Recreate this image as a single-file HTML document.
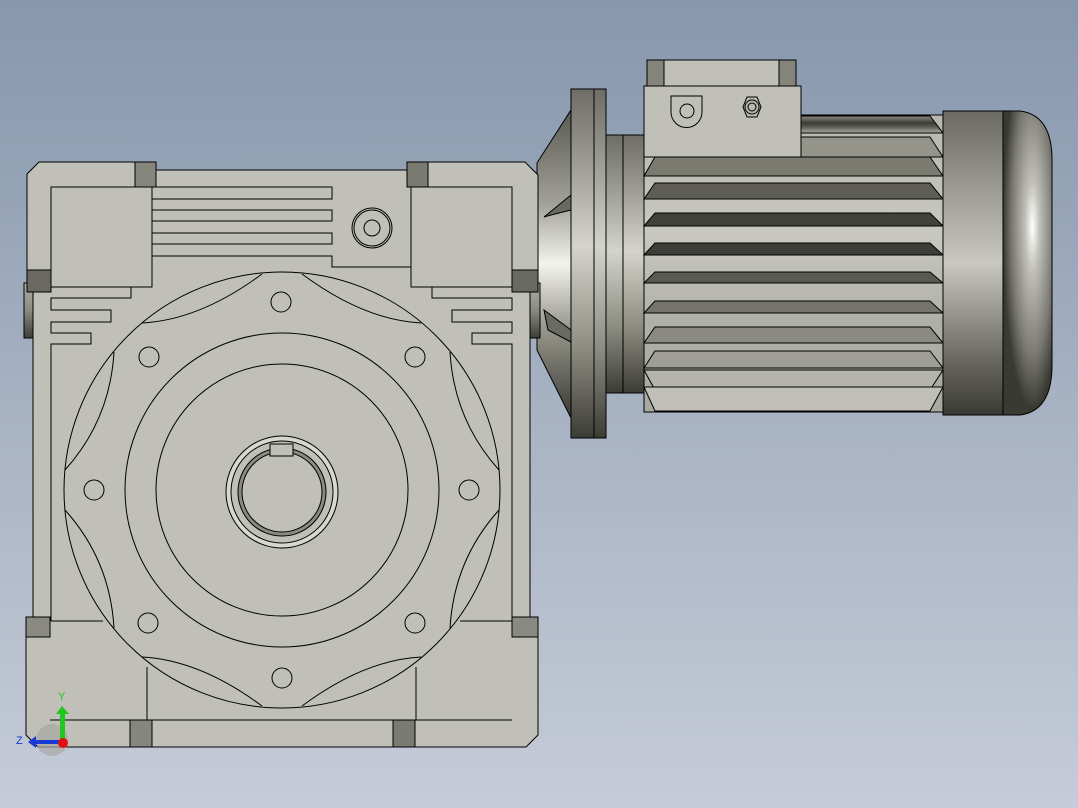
<!DOCTYPE html>
<html><head><meta charset="utf-8"><style>
html,body{margin:0;padding:0;width:1078px;height:808px;overflow:hidden}
svg{display:block}
</style></head><body>
<svg width="1078" height="808" viewBox="0 0 1078 808" xmlns="http://www.w3.org/2000/svg">
<defs>
<linearGradient id="bg" x1="0" y1="0" x2="0" y2="1">
<stop offset="0" stop-color="#8797ad"/><stop offset="1" stop-color="#c6ccd8"/></linearGradient>
<linearGradient id="cyl" x1="0" y1="0" x2="0" y2="1">
<stop offset="0" stop-color="#6e6e66"/><stop offset="0.15" stop-color="#8e8e86"/><stop offset="0.45" stop-color="#d4d4cc"/><stop offset="0.75" stop-color="#8a8a80"/><stop offset="1" stop-color="#3c3c36"/></linearGradient>
<linearGradient id="cone" x1="0" y1="0" x2="0" y2="1">
<stop offset="0" stop-color="#5a5a52"/><stop offset="0.3" stop-color="#a0a098"/><stop offset="0.5" stop-color="#f4f4ee"/><stop offset="0.7" stop-color="#9a9a90"/><stop offset="1" stop-color="#3a3a34"/></linearGradient>
<linearGradient id="body" x1="0" y1="0" x2="0" y2="1">
<stop offset="0" stop-color="#b8b8b0"/><stop offset="0.4" stop-color="#c8c8c0"/><stop offset="0.7" stop-color="#b0b0a8"/><stop offset="1" stop-color="#a8a8a0"/></linearGradient>
<linearGradient id="slot" x1="0" y1="0" x2="0" y2="1">
<stop offset="0" stop-color="#8c8c82"/><stop offset="0.4" stop-color="#3e3e38"/><stop offset="0.6" stop-color="#55554e"/><stop offset="1" stop-color="#a8a8a0"/></linearGradient>
<linearGradient id="fan" x1="0" y1="0" x2="0" y2="1">
<stop offset="0" stop-color="#6a6a62"/><stop offset="0.25" stop-color="#9a9a92"/><stop offset="0.5" stop-color="#c8c8c0"/><stop offset="0.8" stop-color="#6e6e66"/><stop offset="1" stop-color="#3a3a34"/></linearGradient>
<radialGradient id="dome" cx="0.6" cy="0.38" r="0.6">
<stop offset="0" stop-color="#ffffff"/><stop offset="0.25" stop-color="#c0c0b8"/><stop offset="0.7" stop-color="#7a7a72"/><stop offset="1" stop-color="#3a3a34"/></radialGradient>
<linearGradient id="strip" x1="0" y1="0" x2="0" y2="1">
<stop offset="0" stop-color="#b0b0a6"/><stop offset="0.5" stop-color="#8a8a80"/><stop offset="1" stop-color="#3e3e38"/></linearGradient>
</defs>
<rect width="1078" height="808" fill="url(#bg)"/>

<!-- MOTOR -->
<g stroke="#000" stroke-width="1">
<!-- cone -->
<polygon points="537,163 571,110 571,418 537,350" fill="url(#cone)"/>
<polygon points="544,217 571,195 571,210 551,215" fill="#6a6a62"/>
<polygon points="544,310 571,330 571,342 548,330" fill="#6a6a62"/>
<!-- flange -->
<rect x="571" y="89" width="35" height="349" fill="url(#cyl)"/>
<line x1="594" y1="89" x2="594" y2="438"/>
<!-- hub -->
<rect x="606" y="135" width="38" height="258" fill="url(#cyl)"/>
<line x1="623" y1="135" x2="623" y2="393"/>
<!-- fins body -->
<rect x="644" y="115" width="299" height="297" fill="url(#body)"/>
<g fill="url(#slot)">
<polygon points="801,116 930,116 943,133 801,133"/>
<polygon points="801,137 930,137 943,157 801,157" fill="#94948a"/>
<polygon points="655,157 930,157 943,176 644,176" fill="#7a7a70"/>
<polygon points="655,183 930,183 943,199 644,199" fill="#5e5e56"/>
<polygon points="655,213 930,213 943,226 644,226" fill="#42423c"/>
<polygon points="655,243 930,243 943,255 644,255" fill="#3e3e38"/>
<polygon points="655,272 930,272 943,283 644,283" fill="#5a5a54"/>
<polygon points="655,301 930,301 943,313 644,313" fill="#74746c"/>
<polygon points="655,327 930,327 943,343 644,343" fill="#8a8a82"/>
<polygon points="655,351 930,351 943,368 644,368" fill="#9e9e96"/>
<polygon points="644,370 943,370 930,390 655,390" fill="#b4b4ac"/>
<polygon points="644,387 943,387 930,411 655,411" fill="#c0c0b8"/>
</g>
<!-- terminal box -->
<rect x="647" y="60" width="149" height="26" fill="#c0c0b8"/>
<rect x="647" y="60" width="17" height="26" fill="#84847a"/>
<rect x="779" y="60" width="17" height="26" fill="#84847a"/>
<rect x="644" y="86" width="157" height="71" fill="#c0c0b8"/>
<path d="M671,96 L702,96 L702,112 A15,15 0 0 1 671,112 Z" fill="none"/>
<circle cx="687" cy="111" r="7" fill="none"/>
<polygon points="747,97 757,97 761,107 757,117 747,117 743,107" fill="#b8b8b0"/>
<circle cx="752" cy="107" r="7" fill="none"/>
<circle cx="752" cy="107" r="4" fill="none"/>
<!-- fan cover -->
<rect x="943" y="111" width="60" height="304" fill="url(#fan)"/>
<path d="M1003,111 L1020,111 Q1052,115 1052,160 L1052,365 Q1052,411 1020,415 L1003,415 Z" fill="url(#dome)"/>
</g>

<!-- GEARBOX -->
<g stroke="#000" stroke-width="1" fill="#c0c0b8">
<!-- left strip -->
<rect x="24" y="283" width="14" height="55" fill="url(#strip)"/>
<rect x="528" y="283" width="12" height="55" fill="url(#strip)"/>
<!-- outer body -->
<path d="M39,162 L135,162 L135,170 L412,170 L412,162 L525,162 L538,175 L538,292 L530,292 L530,620 L538,620 L538,735 L526,747 L38,747 L26,735 L26,620 L33,620 L33,292 L27,292 L27,174 Z"/>
<!-- dark blocks -->
<rect x="135" y="162" width="21" height="25" fill="#86867e"/>
<rect x="407" y="162" width="21" height="25" fill="#7a7a70"/>
<rect x="27" y="270" width="24" height="22" fill="#6a6a62"/>
<rect x="512" y="270" width="26" height="22" fill="#6a6a62"/>
<rect x="26" y="617" width="24" height="20" fill="#8a8a82"/>
<rect x="512" y="617" width="26" height="20" fill="#8a8a82"/>
<rect x="130" y="720" width="22" height="27" fill="#86867e"/>
<rect x="393" y="720" width="22" height="27" fill="#7a7a70"/>
<!-- top frames -->
<rect x="51" y="187" width="101" height="100"/>
<rect x="411" y="187" width="101" height="100"/>
<path d="M152,187 L332,187 L332,199 L152,199 M152,210 L332,210 L332,221 L152,221 M152,233 L332,233 L332,244 L152,244 M152,256 L332,256 L332,267 L411,267" fill="none"/>
<circle cx="372" cy="228" r="20" fill="none"/>
<circle cx="372" cy="228" r="18" fill="none"/>
<circle cx="372" cy="228" r="8" fill="none"/>
<!-- side fins -->
<path d="M131,287 L131,298 L51,298 L51,310 L111,310 L111,322 L51,322 L51,333 L91,333 L91,344 L51,344 L51,621" fill="none"/>
<path d="M432,287 L432,298 L512,298 L512,310 L452,310 L452,322 L512,322 L512,333 L472,333 L472,344 L512,344 L512,621" fill="none"/>
<!-- bottom -->
<path d="M51,621 L103,621 M460,621 L512,621 M50,720 L512,720 M147,667 L147,720 M416,667 L416,720" fill="none"/>
<!-- flange circles -->
<circle cx="282" cy="490" r="218" fill="#c0c0b8"/>
<circle cx="282" cy="490" r="157" fill="none"/>
<circle cx="282" cy="490" r="126" fill="none"/>
<!-- lobes -->
<g fill="none">
<path d="M262,274 Q200,320 142,323"/><path d="M302,274 Q364,320 421,323"/>
<path d="M262,706 Q200,660 142,657"/><path d="M302,706 Q364,660 421,657"/>
<path d="M65,470 Q110,420 114,352"/><path d="M65,510 Q110,560 114,628"/>
<path d="M499,470 Q454,420 450,352"/><path d="M499,510 Q454,560 450,628"/>
</g>
<!-- holes -->
<g fill="none">
<circle cx="281" cy="302" r="10"/><circle cx="282" cy="678" r="10"/>
<circle cx="94" cy="490" r="10"/><circle cx="469" cy="490" r="10"/>
<circle cx="149" cy="357" r="10"/><circle cx="415" cy="357" r="10"/>
<circle cx="148" cy="623" r="10"/><circle cx="415" cy="623" r="10"/>
</g>
<!-- shaft -->
<circle cx="282" cy="492" r="56" fill="#d8d8d0"/>
<circle cx="282" cy="492" r="51" fill="#c0c0b8"/>
<circle cx="282" cy="492" r="44" fill="#8a8a82"/>
<circle cx="282" cy="492" r="40" fill="#c0c0b8"/>
<rect x="270" y="444" width="23" height="12" fill="#c0c0b8"/>
</g>
<!-- triad -->
<circle cx="52" cy="740" r="16" fill="#a8a8a4" opacity="0.7"/>
<rect x="60" y="712" width="5" height="28" fill="#1ec81e"/>
<polygon points="56,714 62,706 69,714" fill="#1ec81e"/>
<rect x="34" y="740" width="28" height="4" fill="#1a3ad8"/>
<polygon points="36,736 28,742 36,748" fill="#1a3ad8"/>
<circle cx="63" cy="743" r="5" fill="#e01010"/>
<text x="58" y="700" font-family="Liberation Sans, sans-serif" font-size="11" fill="#1ec81e">Y</text>
<text x="16" y="744" font-family="Liberation Sans, sans-serif" font-size="11" fill="#1a3ad8">Z</text>
</svg>
</body></html>
